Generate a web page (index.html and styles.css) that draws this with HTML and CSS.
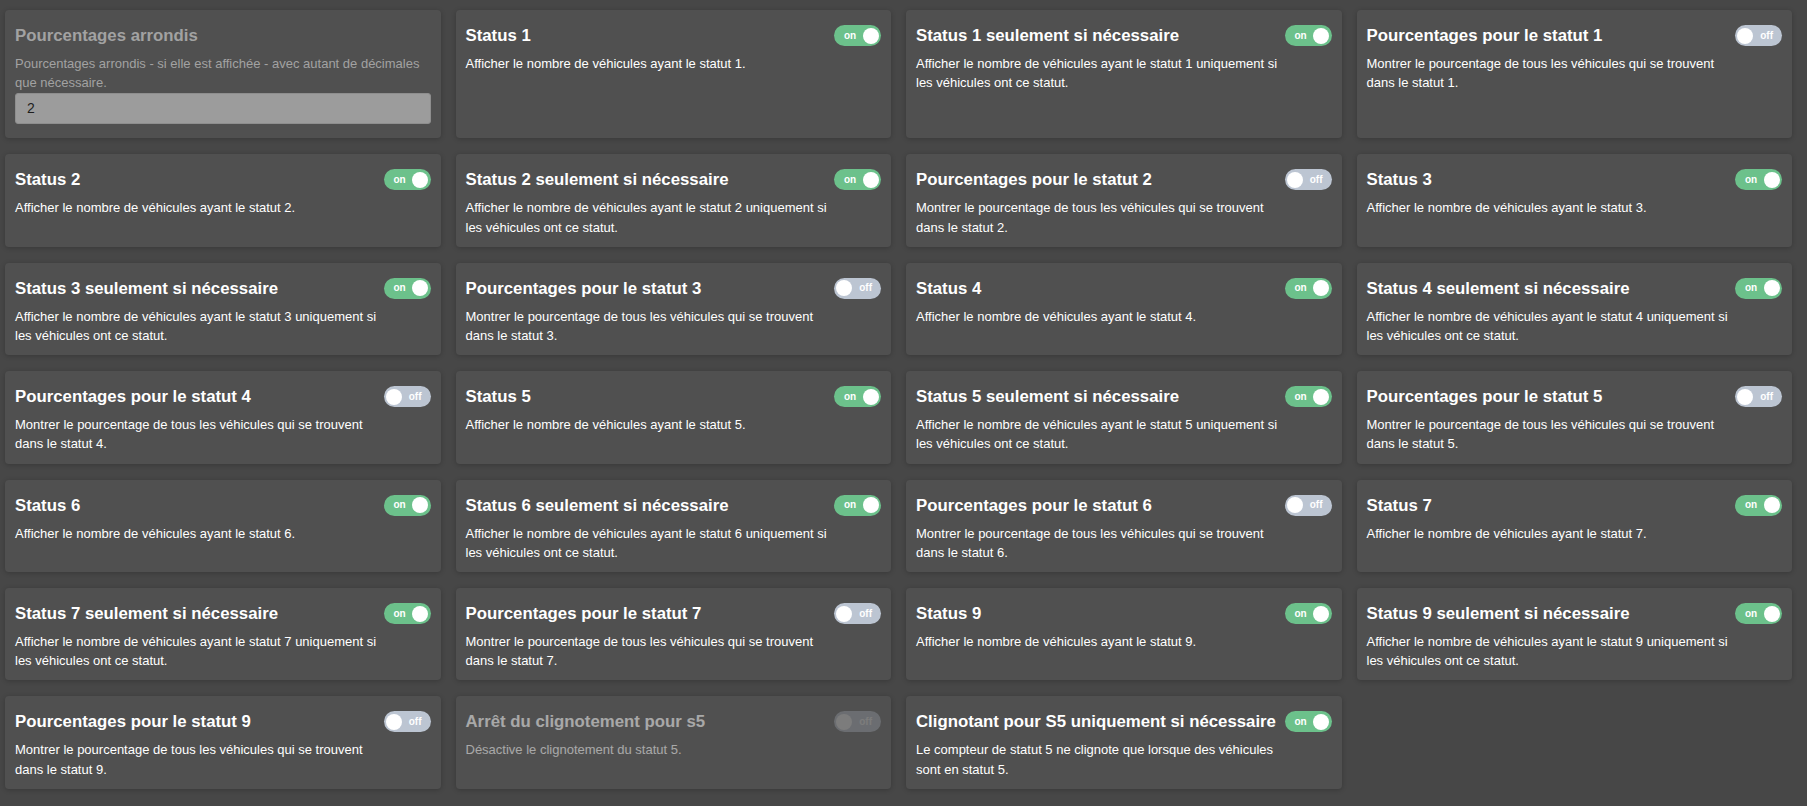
FILE: index.html
```html
<!DOCTYPE html>
<html lang="fr">
<head>
<meta charset="utf-8">
<title>Paramètres des statuts</title>
<link rel="stylesheet" href="styles.css">
</head>
<body>
<main class="grid">
  <section class="card card-input">
    <h3 class="title muted">Pourcentages arrondis</h3>
    <p class="desc muted">Pourcentages arrondis - si elle est affichée - avec autant de décimales que nécessaire.</p>
    <div class="input">2</div>
  </section>

  <section class="card"><div class="text"><h3 class="title">Status 1</h3><p class="desc">Afficher le nombre de véhicules ayant le statut 1.</p></div><span class="toggle on"><span class="lbl">on</span><span class="knob"></span></span></section>
  <section class="card"><div class="text"><h3 class="title">Status 1 seulement si nécessaire</h3><p class="desc">Afficher le nombre de véhicules ayant le statut 1 uniquement si les véhicules ont ce statut.</p></div><span class="toggle on"><span class="lbl">on</span><span class="knob"></span></span></section>
  <section class="card"><div class="text"><h3 class="title">Pourcentages pour le statut 1</h3><p class="desc">Montrer le pourcentage de tous les véhicules qui se trouvent dans le statut 1.</p></div><span class="toggle off"><span class="knob"></span><span class="lbl">off</span></span></section>

  <section class="card"><div class="text"><h3 class="title">Status 2</h3><p class="desc">Afficher le nombre de véhicules ayant le statut 2.</p></div><span class="toggle on"><span class="lbl">on</span><span class="knob"></span></span></section>
  <section class="card"><div class="text"><h3 class="title">Status 2 seulement si nécessaire</h3><p class="desc">Afficher le nombre de véhicules ayant le statut 2 uniquement si les véhicules ont ce statut.</p></div><span class="toggle on"><span class="lbl">on</span><span class="knob"></span></span></section>
  <section class="card"><div class="text"><h3 class="title">Pourcentages pour le statut 2</h3><p class="desc">Montrer le pourcentage de tous les véhicules qui se trouvent dans le statut 2.</p></div><span class="toggle off"><span class="knob"></span><span class="lbl">off</span></span></section>
  <section class="card"><div class="text"><h3 class="title">Status 3</h3><p class="desc">Afficher le nombre de véhicules ayant le statut 3.</p></div><span class="toggle on"><span class="lbl">on</span><span class="knob"></span></span></section>

  <section class="card"><div class="text"><h3 class="title">Status 3 seulement si nécessaire</h3><p class="desc">Afficher le nombre de véhicules ayant le statut 3 uniquement si les véhicules ont ce statut.</p></div><span class="toggle on"><span class="lbl">on</span><span class="knob"></span></span></section>
  <section class="card"><div class="text"><h3 class="title">Pourcentages pour le statut 3</h3><p class="desc">Montrer le pourcentage de tous les véhicules qui se trouvent dans le statut 3.</p></div><span class="toggle off"><span class="knob"></span><span class="lbl">off</span></span></section>
  <section class="card"><div class="text"><h3 class="title">Status 4</h3><p class="desc">Afficher le nombre de véhicules ayant le statut 4.</p></div><span class="toggle on"><span class="lbl">on</span><span class="knob"></span></span></section>
  <section class="card"><div class="text"><h3 class="title">Status 4 seulement si nécessaire</h3><p class="desc">Afficher le nombre de véhicules ayant le statut 4 uniquement si les véhicules ont ce statut.</p></div><span class="toggle on"><span class="lbl">on</span><span class="knob"></span></span></section>

  <section class="card"><div class="text"><h3 class="title">Pourcentages pour le statut 4</h3><p class="desc">Montrer le pourcentage de tous les véhicules qui se trouvent dans le statut 4.</p></div><span class="toggle off"><span class="knob"></span><span class="lbl">off</span></span></section>
  <section class="card"><div class="text"><h3 class="title">Status 5</h3><p class="desc">Afficher le nombre de véhicules ayant le statut 5.</p></div><span class="toggle on"><span class="lbl">on</span><span class="knob"></span></span></section>
  <section class="card"><div class="text"><h3 class="title">Status 5 seulement si nécessaire</h3><p class="desc">Afficher le nombre de véhicules ayant le statut 5 uniquement si les véhicules ont ce statut.</p></div><span class="toggle on"><span class="lbl">on</span><span class="knob"></span></span></section>
  <section class="card"><div class="text"><h3 class="title">Pourcentages pour le statut 5</h3><p class="desc">Montrer le pourcentage de tous les véhicules qui se trouvent dans le statut 5.</p></div><span class="toggle off"><span class="knob"></span><span class="lbl">off</span></span></section>

  <section class="card"><div class="text"><h3 class="title">Status 6</h3><p class="desc">Afficher le nombre de véhicules ayant le statut 6.</p></div><span class="toggle on"><span class="lbl">on</span><span class="knob"></span></span></section>
  <section class="card"><div class="text"><h3 class="title">Status 6 seulement si nécessaire</h3><p class="desc">Afficher le nombre de véhicules ayant le statut 6 uniquement si les véhicules ont ce statut.</p></div><span class="toggle on"><span class="lbl">on</span><span class="knob"></span></span></section>
  <section class="card"><div class="text"><h3 class="title">Pourcentages pour le statut 6</h3><p class="desc">Montrer le pourcentage de tous les véhicules qui se trouvent dans le statut 6.</p></div><span class="toggle off"><span class="knob"></span><span class="lbl">off</span></span></section>
  <section class="card"><div class="text"><h3 class="title">Status 7</h3><p class="desc">Afficher le nombre de véhicules ayant le statut 7.</p></div><span class="toggle on"><span class="lbl">on</span><span class="knob"></span></span></section>

  <section class="card"><div class="text"><h3 class="title">Status 7 seulement si nécessaire</h3><p class="desc">Afficher le nombre de véhicules ayant le statut 7 uniquement si les véhicules ont ce statut.</p></div><span class="toggle on"><span class="lbl">on</span><span class="knob"></span></span></section>
  <section class="card"><div class="text"><h3 class="title">Pourcentages pour le statut 7</h3><p class="desc">Montrer le pourcentage de tous les véhicules qui se trouvent dans le statut 7.</p></div><span class="toggle off"><span class="knob"></span><span class="lbl">off</span></span></section>
  <section class="card"><div class="text"><h3 class="title">Status 9</h3><p class="desc">Afficher le nombre de véhicules ayant le statut 9.</p></div><span class="toggle on"><span class="lbl">on</span><span class="knob"></span></span></section>
  <section class="card"><div class="text"><h3 class="title">Status 9 seulement si nécessaire</h3><p class="desc">Afficher le nombre de véhicules ayant le statut 9 uniquement si les véhicules ont ce statut.</p></div><span class="toggle on"><span class="lbl">on</span><span class="knob"></span></span></section>

  <section class="card"><div class="text"><h3 class="title">Pourcentages pour le statut 9</h3><p class="desc">Montrer le pourcentage de tous les véhicules qui se trouvent dans le statut 9.</p></div><span class="toggle off"><span class="knob"></span><span class="lbl">off</span></span></section>
  <section class="card disabled"><div class="text"><h3 class="title">Arrêt du clignotement pour s5</h3><p class="desc">Désactive le clignotement du statut 5.</p></div><span class="toggle off"><span class="knob"></span><span class="lbl">off</span></span></section>
  <section class="card"><div class="text"><h3 class="title">Clignotant pour S5 uniquement si nécessaire</h3><p class="desc">Le compteur de statut 5 ne clignote que lorsque des véhicules sont en statut 5.</p></div><span class="toggle on"><span class="lbl">on</span><span class="knob"></span></span></section>
</main>
</body>
</html>
```

FILE: styles.css
```css
html, body {
  margin: 0;
  padding: 0;
  background: #474747;
  font-family: "Liberation Sans", Arial, sans-serif;
  color: #fff;
}

.grid {
  display: grid;
  grid-template-columns: repeat(4, 1fr);
  column-gap: 15px;
  row-gap: 16px;
  padding: 10px 15px 10px 5px;
  align-items: stretch;
}

.card {
  background: #505050;
  border-radius: 4px;
  box-shadow: 0 1px 5px rgba(0, 0, 0, 0.22);
  padding: 15px 10px 10px 10px;
  display: grid;
  grid-template-columns: 1fr 47px;
  align-items: start;
}

.card-input {
  display: block;
}

.text {
  min-width: 0;
}

.title {
  margin: 0;
  font-size: 16.8px;
  line-height: 21px;
  font-weight: bold;
  color: #fff;
  white-space: nowrap;
}

.desc {
  margin: 8px 0 0 0;
  font-size: 13px;
  line-height: 19.2px;
  color: #fff;
}

.muted {
  color: #a2a2a2;
}

.input {
  margin: 1px 0 4px 0;
  height: 31px;
  box-sizing: border-box;
  background: #9c9c9c;
  border: 1px solid #8e8e8e;
  border-radius: 3px;
  padding: 0 11px;
  font-size: 14px;
  line-height: 29px;
  color: #1e1e1e;
}

.toggle {
  width: 47px;
  height: 21px;
  box-sizing: border-box;
  border-radius: 11px;
  display: flex;
  align-items: center;
  justify-content: space-between;
}

.toggle.on {
  background: #6cc18b;
  padding: 0 2.5px 0 10px;
}

.toggle.off {
  background: #bcc5d2;
  padding: 0 9px 0 2px;
}

.knob {
  width: 16px;
  height: 16px;
  border-radius: 50%;
  background: #fff;
}

.lbl {
  font-size: 10px;
  font-weight: bold;
  color: #fff;
  line-height: 10px;
}

.disabled .text {
  opacity: 0.5;
}

.disabled .toggle {
  opacity: 0.25;
}
```
